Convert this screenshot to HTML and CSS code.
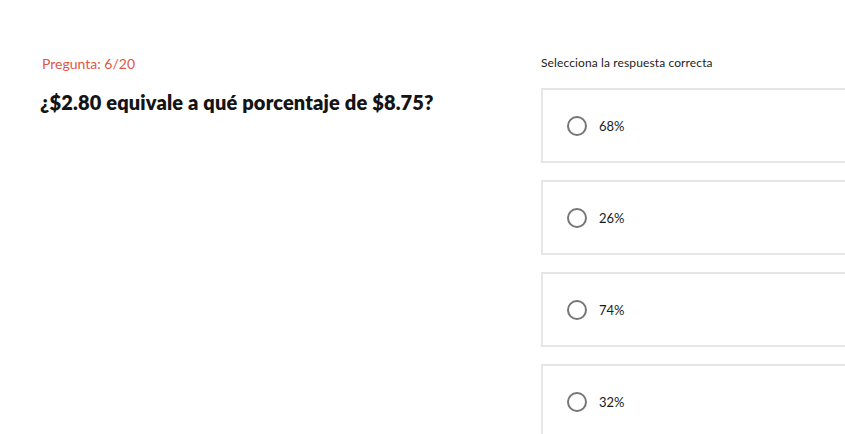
FILE: index.html
```html
<!DOCTYPE html>
<html lang="es">
<head>
<meta charset="utf-8">
<title>Pregunta 6/20</title>
<link rel="stylesheet" href="styles.css">
</head>
<body>
<main class="page">
  <section class="question-col">
    <p class="counter">Pregunta: 6/20</p>
    <h1 class="question">¿$2.80 equivale a qué porcentaje de $8.75?</h1>
  </section>
  <section class="answer-col">
    <p class="hint">Selecciona la respuesta correcta</p>
    <ul class="options">
      <li class="option"><span class="radio"></span><span class="option-text">68%</span></li>
      <li class="option"><span class="radio"></span><span class="option-text">26%</span></li>
      <li class="option"><span class="radio"></span><span class="option-text">74%</span></li>
      <li class="option"><span class="radio"></span><span class="option-text">32%</span></li>
    </ul>
  </section>
</main>
</body>
</html>
```

FILE: styles.css
```css
html, body {
  margin: 0;
  padding: 0;
  background: #ffffff;
  overflow: hidden;
}

body {
  font-family: "Lato", "Inter", "Noto Sans", sans-serif;
  color: #141414;
}

.page {
  display: grid;
  grid-template-columns: 501px 420px;
  padding: 54px 0 0 40px;
  width: 1000px;
}

.question-col {
  display: flex;
  flex-direction: column;
}

.counter {
  margin: 0 0 0 2px;
  font-size: 14px;
  line-height: 20px;
  color: #e3563f;
}

.question {
  margin: 14px 0 0 0;
  font-size: 20px;
  line-height: 28px;
  font-weight: 800;
  letter-spacing: 0.15px;
  color: #141414;
}

.answer-col {
  display: flex;
  flex-direction: column;
}

.hint {
  margin: 0;
  font-size: 12px;
  line-height: 18px;
  letter-spacing: 0.12px;
  color: #222222;
}

.options {
  list-style: none;
  margin: 16px 0 0 0;
  padding: 0;
  display: flex;
  flex-direction: column;
  gap: 17px;
}

.option {
  box-sizing: border-box;
  height: 75px;
  border: 2px solid #e6e6e6;
  display: flex;
  align-items: center;
  gap: 12px;
  padding-left: 24px;
}

.radio {
  box-sizing: border-box;
  width: 20px;
  height: 20px;
  border: 2px solid #767676;
  border-radius: 50%;
  flex: none;
}

.option-text {
  font-size: 13px;
  color: #1a1a1a;
}
```
